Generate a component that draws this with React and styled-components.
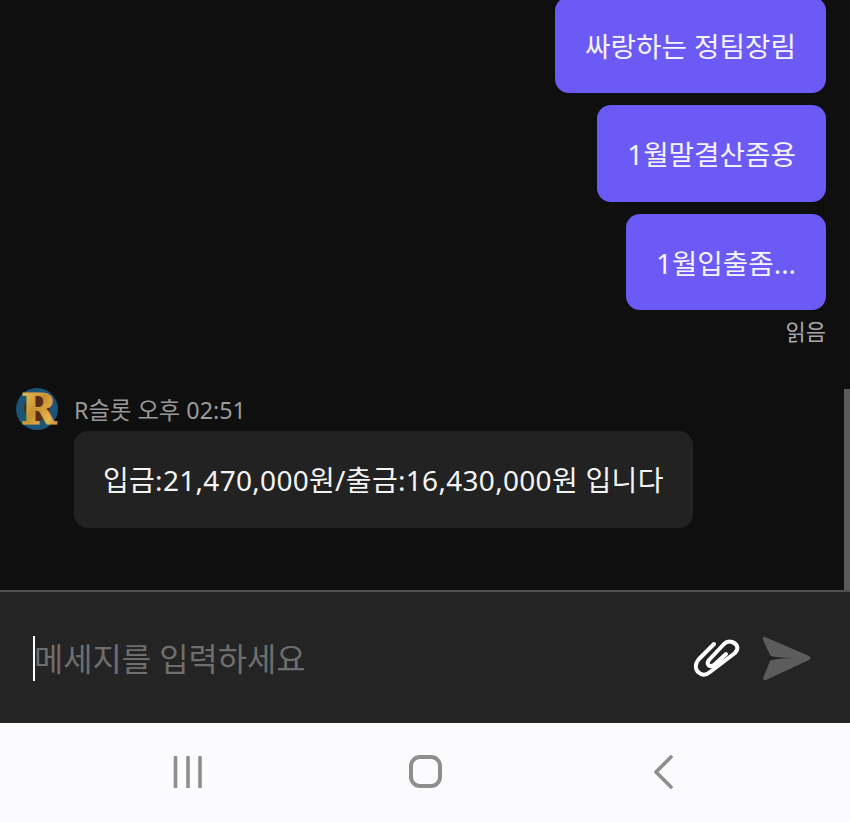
import React from "react";
import styled, { createGlobalStyle } from "styled-components";

const sentMessages = ["싸랑하는 정팀장림", "1월말결산좀용", "1월입출좀..."];

const App = () => {
  return (
    <>
      <GlobalStyle />
      <Screen>
        <Messages>
          <SentList>
            {sentMessages.map((text) => (
              <SentBubble key={text}>{text}</SentBubble>
            ))}
            <ReadMark>읽음</ReadMark>
          </SentList>
          <Received>
            <SenderRow>
              <Avatar />
              <SenderMeta>R슬롯 오후 02:51</SenderMeta>
            </SenderRow>
            <ReceivedBubble>입금:21,470,000원/출금:16,430,000원 입니다</ReceivedBubble>
          </Received>
          <ScrollThumb />
        </Messages>
        <Composer>
          <InputArea>
            <Caret />
            <Placeholder>메세지를 입력하세요</Placeholder>
          </InputArea>
          <ClipIcon />
          <SendIcon />
        </Composer>
        <NavBar>
          <RecentsIcon />
          <HomeIcon />
          <BackIcon />
        </NavBar>
      </Screen>
    </>
  );
};

// Icons ***************************
const Avatar = () => (
  <svg width="42" height="42" viewBox="0 0 42 42" overflow="visible">
    <defs>
      <linearGradient id="gold" x1="0" y1="0" x2="1" y2="1">
        <stop offset="0" stopColor="#f3cf74" />
        <stop offset="0.45" stopColor="#c98f2e" />
        <stop offset="0.75" stopColor="#e8b850" />
        <stop offset="1" stopColor="#a8701e" />
      </linearGradient>
    </defs>
    <circle cx="21" cy="21" r="21" fill="#1c5478" />
    <circle cx="21" cy="20" r="13" fill="#5a2a14" />
    <text
      x="22.500"
      y="36"
      textAnchor="middle"
      fontFamily="'DejaVu Serif', serif"
      fontWeight="700"
      fontSize="43"
      fill="url(#gold)"
      stroke="#d9a440"
      strokeWidth="0.8"
    >
      R
    </text>
  </svg>
);

const ClipIcon = () => (
  <ClipSvg width="58" height="54" viewBox="0 0 58 54" fill="none">
    <path
      d="M26 11 L11 26 C6 32 7 38 13 41 C16 42.500 19 41.500 22 39 L47 20 C51 16 50 11 44 9 C41 8 38 9 36 11 L21 27 C18 31 21 35 26 32 L38 21"
      stroke="#fff"
      strokeWidth="4"
      strokeLinecap="round"
      strokeLinejoin="round"
    />
  </ClipSvg>
);

const SendIcon = () => (
  <SendSvg width="62" height="56" viewBox="0 0 62 56">
    <path
      d="M10 7 L54 26 Q57 28 54 30 L11 50 Q7.500 51 8.500 47 L15 31 Q16 29 38 28 Q16 27.500 15 25 L8 10 Q7.500 6 10 7 Z"
      fill="#5c5c5c"
    />
  </SendSvg>
);

const RecentsIcon = () => (
  <svg width="32" height="32" viewBox="0 0 32 32" fill="none">
    <path
      d="M3.500 1.500 V31 M16 1.500 V31 M28 1.500 V31"
      stroke="#8e8e8e"
      strokeWidth="3.600"
      strokeLinecap="round"
    />
  </svg>
);

const BackIcon = () => (
  <svg width="22" height="34" viewBox="0 0 22 34" fill="none">
    <path
      d="M18 2 L3 17 L18 32"
      stroke="#8e8e8e"
      strokeWidth="3.600"
      strokeLinecap="round"
      strokeLinejoin="round"
    />
  </svg>
);

// Styles ***************************
const GlobalStyle = createGlobalStyle`
  html, body {
    margin: 0;
    padding: 0;
    height: 822px;
    overflow: hidden;
    background: #0f0f10;
  }
  * {
    box-sizing: border-box;
  }
`;

const Screen = styled.div`
  display: flex;
  flex-direction: column;
  width: 850px;
  height: 822px;
  font-family: "Noto Sans", "Noto Sans CJK KR", sans-serif;
`;

const Messages = styled.div`
  position: relative;
  display: flex;
  flex-direction: column;
  justify-content: flex-end;
  height: 590px;
  padding: 0 24px 62px 16px;
  overflow: hidden;
  background: #0f0f10;
`;

const SentList = styled.div`
  display: flex;
  flex-direction: column;
  flex-shrink: 0;
  align-items: flex-end;
  gap: 12px;
`;

const SentBubble = styled.div`
  display: flex;
  align-items: center;
  height: 96.500px;
  padding: 4px 30px 0;
  border-radius: 14px;
  background: #6c5af6;
  color: #f5f3ff;
  font-size: 27.700px;
  line-height: 1;
  white-space: nowrap;
`;

const ReadMark = styled.div`
  margin-top: -7px;
  color: #a9a9a9;
  font-size: 22px;
  line-height: 32px;
`;

const Received = styled.div`
  display: flex;
  flex-direction: column;
  flex-shrink: 0;
  margin-top: 41px;
`;

const SenderRow = styled.div`
  display: flex;
  align-items: center;
  gap: 16px;
  height: 42px;
`;

const SenderMeta = styled.span`
  margin-top: 3px;
  color: #9a9a9a;
  font-size: 23.300px;
  line-height: 1;
`;

const ReceivedBubble = styled.div`
  display: flex;
  align-items: center;
  align-self: flex-start;
  height: 97px;
  margin: 1px 0 0 58px;
  padding: 0 29px;
  border-radius: 14px;
  background: #222222;
  color: #f4f4f4;
  font-size: 28px;
  letter-spacing: 0.300px;
  line-height: 1;
  white-space: nowrap;
`;

const ScrollThumb = styled.div`
  position: absolute;
  top: 389px;
  right: 0;
  bottom: 0;
  width: 6px;
  background: #5a5a5a;
`;

const Composer = styled.div`
  display: flex;
  align-items: center;
  height: 133px;
  padding: 0 33px;
  border-top: 2px solid #505050;
  background: #242424;
`;

const InputArea = styled.div`
  display: flex;
  flex: 1;
  align-items: center;
  margin-top: 2px;
`;

const Caret = styled.div`
  width: 2px;
  height: 45px;
  background: #fff;
`;

const Placeholder = styled.span`
  margin-left: -1px;
  color: #6e6e6e;
  font-size: 31.800px;
  line-height: 1;
`;

const ClipSvg = styled.svg`
  margin: 4px 9px 0 0;
`;

const SendSvg = styled.svg`
  margin-top: 0;
`;

const NavBar = styled.div`
  display: flex;
  align-items: center;
  justify-content: space-between;
  flex: 1;
  padding: 0 175px 2px 172px;
  background: #fbfbfd;
`;

const HomeIcon = styled.div`
  width: 33px;
  height: 33px;
  margin-right: 6px;
  border: 4px solid #8e8e8e;
  border-radius: 11px;
`;

export default App;
